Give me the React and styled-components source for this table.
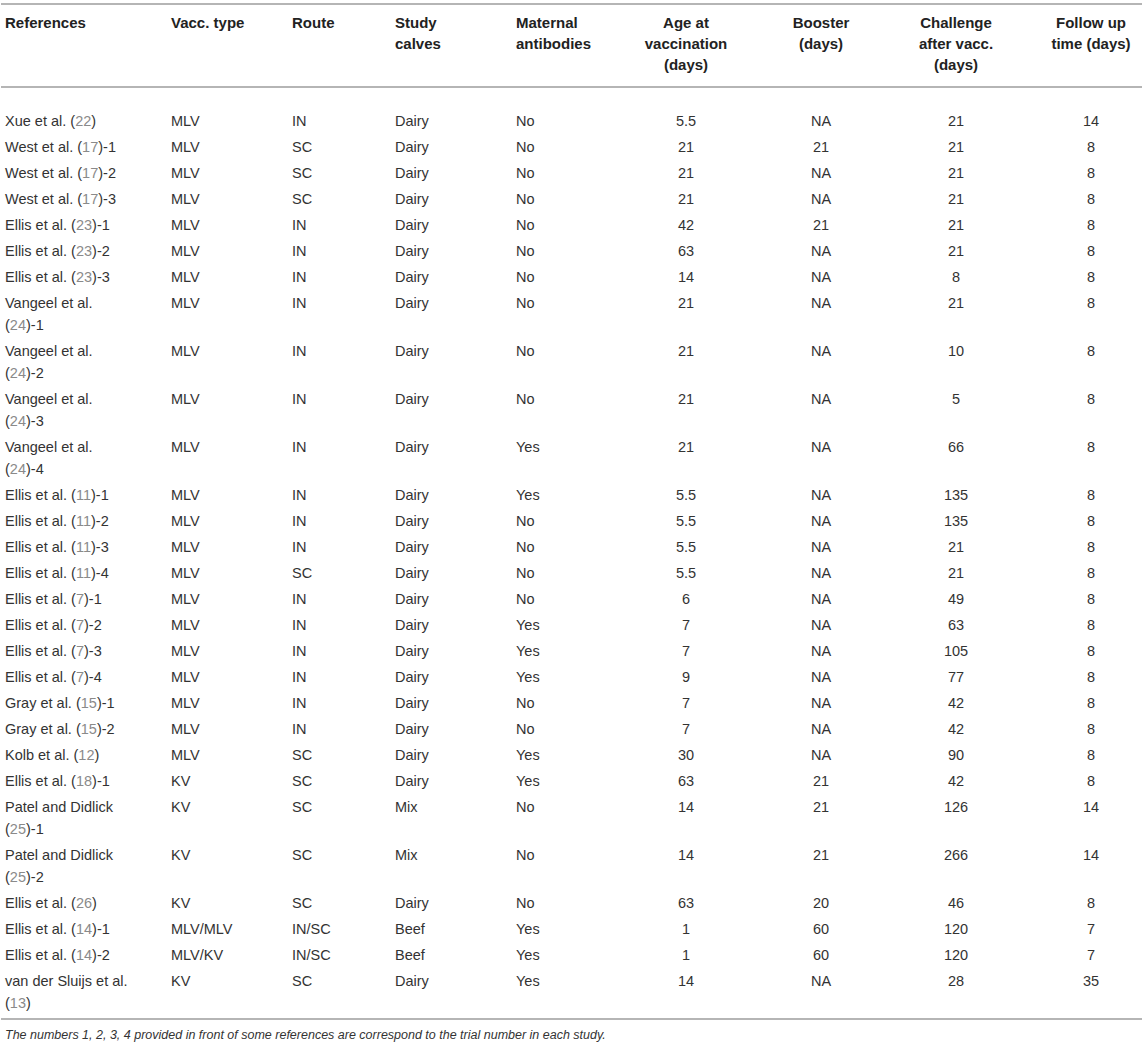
import React from 'react';
import styled, { createGlobalStyle } from 'styled-components';

const GlobalStyle = createGlobalStyle`
	body {
		margin: 0;
		background: #fff;
	}
`;

const Page = styled.div`
	padding: 3px 1px 0 1px;
	font-family: 'Liberation Sans', Arial, sans-serif;
	color: #333;
`;

const Table = styled.table`
	width: 1141px;
	border-collapse: collapse;
	table-layout: fixed;
	font-size: 14.5px;
	border-bottom: 2px solid #b5b5b5;
`;

const HeadCell = styled.th`
	font-weight: bold;
	font-size: 15px;
	line-height: 21px;
	text-align: ${(p) => (p.$center ? 'center' : 'left')};
	vertical-align: top;
	padding: 7px ${(p) => p.$right}px 11px ${(p) => p.$left}px;
	border-top: 2px solid #b5b5b5;
	border-bottom: 2px solid #b5b5b5;
	color: #222;
`;

const Row = styled.tr`
	&:first-child td {
		padding-top: 22px;
	}
	&:last-child td {
		padding-bottom: 4px;
	}
`;

const Cell = styled.td`
	line-height: 22px;
	text-align: ${(p) => (p.$center ? 'center' : 'left')};
	vertical-align: top;
	padding: 2px ${(p) => p.$right}px 2px ${(p) => p.$left}px;
`;

const Cite = styled.span`
	color: #8a8a8a;
`;

const Note = styled.p`
	margin: 0;
	padding: 6px 4px 0;
	font-style: italic;
	font-size: 12.5px;
	line-height: 18px;
	color: #333;
`;

const columns = [
	{ title: 'References', width: 166, left: 4, right: 36 },
	{ title: 'Vacc. type', width: 121, left: 4, right: 4 },
	{ title: 'Route', width: 103, left: 4, right: 4 },
	{ title: 'Study calves', width: 121, left: 4, right: 40 },
	{ title: 'Maternal antibodies', width: 104, left: 4, right: 4 },
	{ title: 'Age at vaccination (days)', width: 140, left: 20, right: 20, center: true },
	{ title: 'Booster (days)', width: 130, left: 20, right: 20, center: true },
	{ title: 'Challenge after vacc. (days)', width: 140, left: 25, right: 25, center: true },
	{ title: 'Follow up time (days)', width: 116, left: 20, right: 6, center: true },
];

const rows = [
	['Xue et al.', '22', '', 'MLV', 'IN', 'Dairy', 'No', '5.5', 'NA', '21', '14'],
	['West et al.', '17', '-1', 'MLV', 'SC', 'Dairy', 'No', '21', '21', '21', '8'],
	['West et al.', '17', '-2', 'MLV', 'SC', 'Dairy', 'No', '21', 'NA', '21', '8'],
	['West et al.', '17', '-3', 'MLV', 'SC', 'Dairy', 'No', '21', 'NA', '21', '8'],
	['Ellis et al.', '23', '-1', 'MLV', 'IN', 'Dairy', 'No', '42', '21', '21', '8'],
	['Ellis et al.', '23', '-2', 'MLV', 'IN', 'Dairy', 'No', '63', 'NA', '21', '8'],
	['Ellis et al.', '23', '-3', 'MLV', 'IN', 'Dairy', 'No', '14', 'NA', '8', '8'],
	['Vangeel et al.', '24', '-1', 'MLV', 'IN', 'Dairy', 'No', '21', 'NA', '21', '8'],
	['Vangeel et al.', '24', '-2', 'MLV', 'IN', 'Dairy', 'No', '21', 'NA', '10', '8'],
	['Vangeel et al.', '24', '-3', 'MLV', 'IN', 'Dairy', 'No', '21', 'NA', '5', '8'],
	['Vangeel et al.', '24', '-4', 'MLV', 'IN', 'Dairy', 'Yes', '21', 'NA', '66', '8'],
	['Ellis et al.', '11', '-1', 'MLV', 'IN', 'Dairy', 'Yes', '5.5', 'NA', '135', '8'],
	['Ellis et al.', '11', '-2', 'MLV', 'IN', 'Dairy', 'No', '5.5', 'NA', '135', '8'],
	['Ellis et al.', '11', '-3', 'MLV', 'IN', 'Dairy', 'No', '5.5', 'NA', '21', '8'],
	['Ellis et al.', '11', '-4', 'MLV', 'SC', 'Dairy', 'No', '5.5', 'NA', '21', '8'],
	['Ellis et al.', '7', '-1', 'MLV', 'IN', 'Dairy', 'No', '6', 'NA', '49', '8'],
	['Ellis et al.', '7', '-2', 'MLV', 'IN', 'Dairy', 'Yes', '7', 'NA', '63', '8'],
	['Ellis et al.', '7', '-3', 'MLV', 'IN', 'Dairy', 'Yes', '7', 'NA', '105', '8'],
	['Ellis et al.', '7', '-4', 'MLV', 'IN', 'Dairy', 'Yes', '9', 'NA', '77', '8'],
	['Gray et al.', '15', '-1', 'MLV', 'IN', 'Dairy', 'No', '7', 'NA', '42', '8'],
	['Gray et al.', '15', '-2', 'MLV', 'IN', 'Dairy', 'No', '7', 'NA', '42', '8'],
	['Kolb et al.', '12', '', 'MLV', 'SC', 'Dairy', 'Yes', '30', 'NA', '90', '8'],
	['Ellis et al.', '18', '-1', 'KV', 'SC', 'Dairy', 'Yes', '63', '21', '42', '8'],
	['Patel and Didlick', '25', '-1', 'KV', 'SC', 'Mix', 'No', '14', '21', '126', '14'],
	['Patel and Didlick', '25', '-2', 'KV', 'SC', 'Mix', 'No', '14', '21', '266', '14'],
	['Ellis et al.', '26', '', 'KV', 'SC', 'Dairy', 'No', '63', '20', '46', '8'],
	['Ellis et al.', '14', '-1', 'MLV/MLV', 'IN/SC', 'Beef', 'Yes', '1', '60', '120', '7'],
	['Ellis et al.', '14', '-2', 'MLV/KV', 'IN/SC', 'Beef', 'Yes', '1', '60', '120', '7'],
	['van der Sluijs et al.', '13', '', 'KV', 'SC', 'Dairy', 'Yes', '14', 'NA', '28', '35'],
];

const App = () => (
	<Page>
		<GlobalStyle />
		<Table>
			<colgroup>
				{columns.map((c) => (
					<col key={c.title} style={{ width: c.width }} />
				))}
			</colgroup>
			<thead>
				<tr>
					{columns.map((c) => (
						<HeadCell
							key={c.title}
							$center={c.center}
							$left={c.left}
							$right={c.right}>
							{c.title}
						</HeadCell>
					))}
				</tr>
			</thead>
			<tbody>
				{rows.map(([name, cite, trial, ...rest], i) => (
					<Row key={i}>
						<Cell $left={columns[0].left} $right={columns[0].right}>
							{name} (<Cite>{cite}</Cite>){trial}
						</Cell>
						{rest.map((value, j) => {
							const col = columns[j + 1];
							return (
								<Cell
									key={j}
									$center={col.center}
									$left={col.left}
									$right={col.right}>
									{value}
								</Cell>
							);
						})}
					</Row>
				))}
			</tbody>
		</Table>
		<Note>
			The numbers 1, 2, 3, 4 provided in front of some references are correspond
			to the trial number in each study.
		</Note>
	</Page>
);

export default App;
